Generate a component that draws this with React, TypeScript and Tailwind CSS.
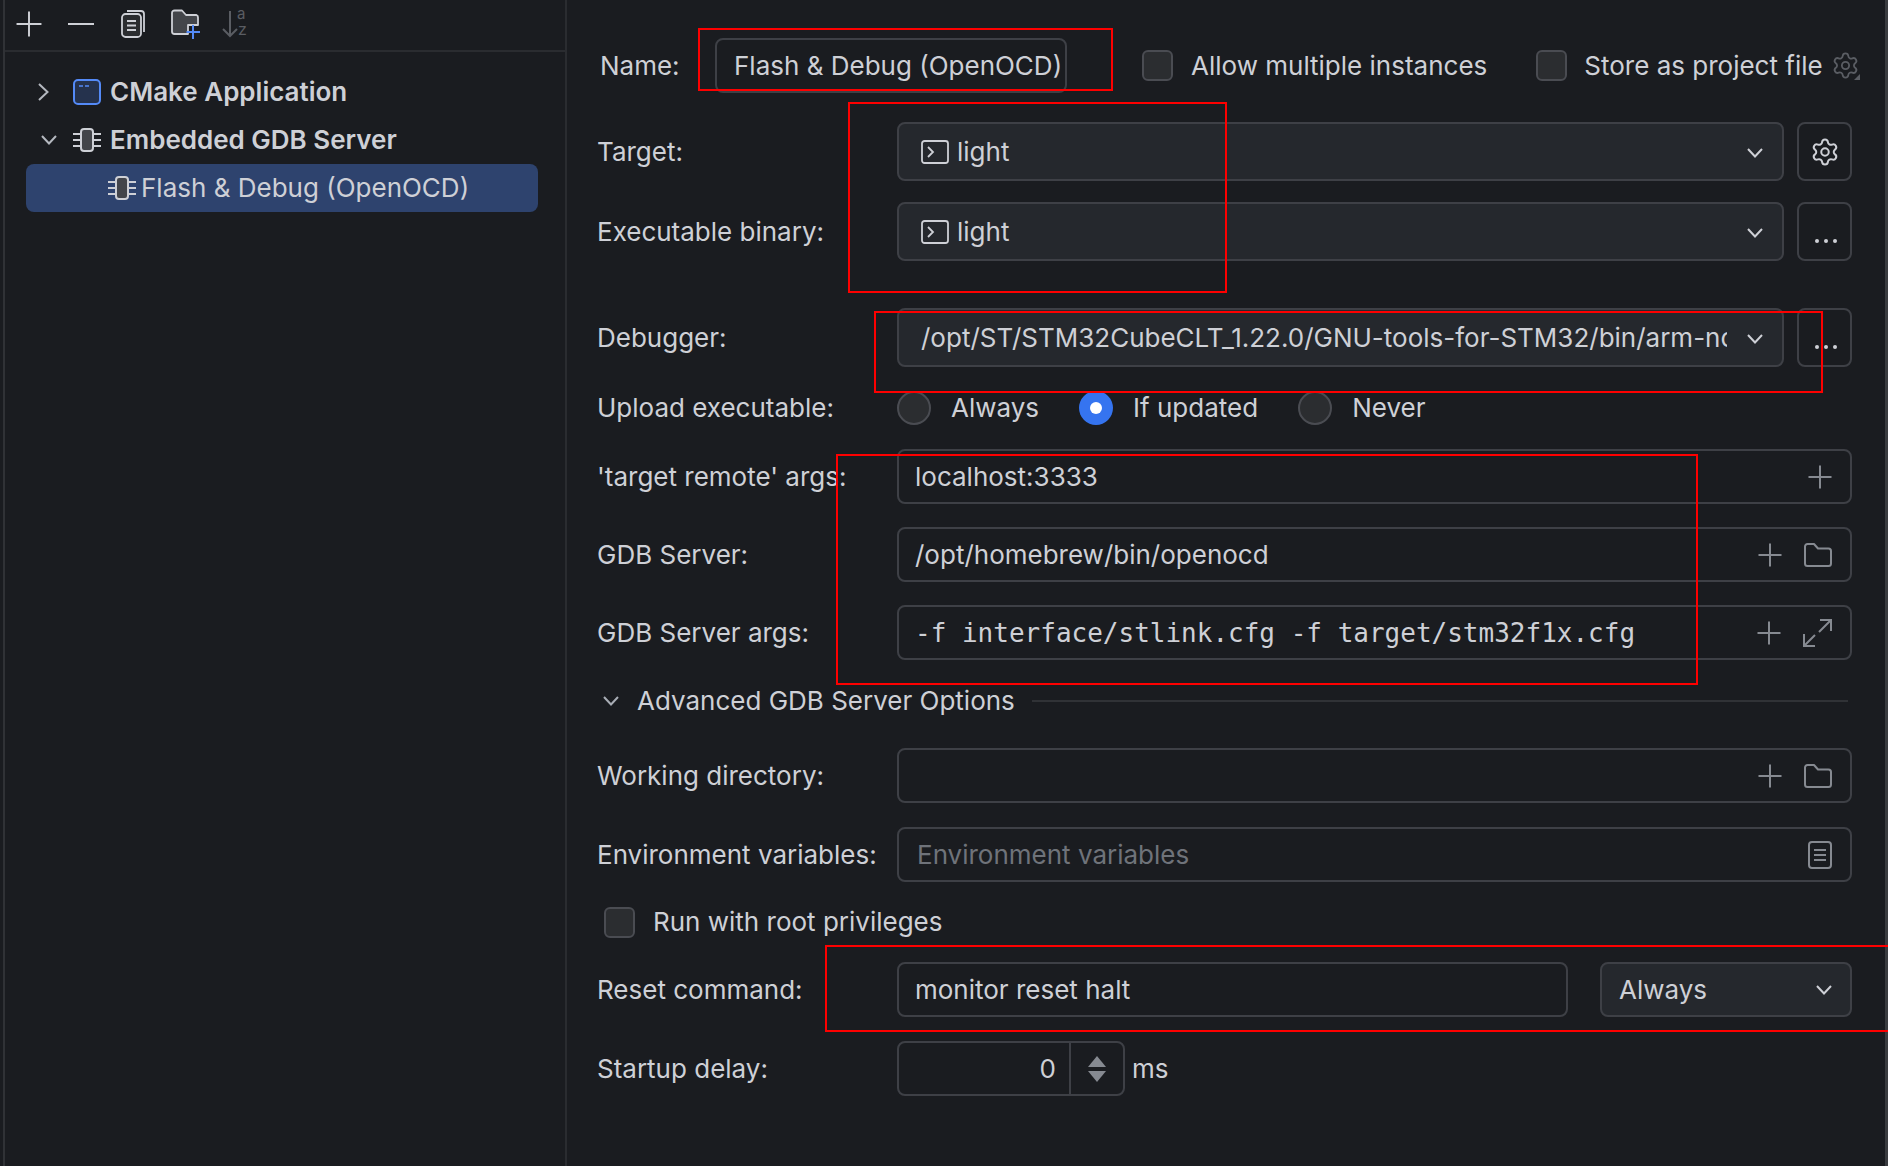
import React from "react";
import { Settings } from "lucide-react";

const Plus = ({ size = 24, color = "#868a91" }: { size?: number; color?: string }) => (
  <svg width={size} height={size} viewBox="0 0 24 24" fill="none" stroke={color} strokeWidth={size > 24 ? 1.8 : 2}>
    <path d="M12 0.5V23.5M0.5 12H23.5" />
  </svg>
);
const Folder = () => (
  <svg width="28" height="24" viewBox="0 0 28 24" fill="none" stroke="#868a91" strokeWidth="2" strokeLinejoin="round">
    <path d="M1 3.5A2.5 2.5 0 0 1 3.5 1H10L14 5.5H24.5A2.5 2.5 0 0 1 27 8V20.5A2.5 2.5 0 0 1 24.5 23H3.5A2.5 2.5 0 0 1 1 20.5Z" />
  </svg>
);
const Expand = () => (
  <svg width="29" height="29" viewBox="0 0 29 29" fill="none" stroke="#868a91" strokeWidth="2">
    <path d="M17 2H28V13M28 2L16 14M1 16V28H12M1 28L12 17" />
  </svg>
);
const Doc = () => (
  <svg width="24" height="28" viewBox="0 0 24 28" fill="none" stroke="#868a91" strokeWidth="2">
    <rect x="1" y="1" width="22" height="26" rx="3" />
    <path d="M6 9H18M6 14H18M6 19H18" />
  </svg>
);
const Chevron = ({ color = "#ced0d6" }: { color?: string }) => (
  <svg width="16" height="10" viewBox="0 0 16 10" fill="none" stroke={color} strokeWidth="2">
    <path d="M1 1L8 8.5L15 1" />
  </svg>
);
const Term = () => (
  <svg width="28" height="24" viewBox="0 0 28 24" fill="none" stroke="#ced0d6" strokeWidth="1.8">
    <rect x="1" y="1" width="26" height="22" rx="2.5" />
    <path d="M7 7L12 12L7 17" />
  </svg>
);
const Chip = () => (
  <svg width="28" height="24" viewBox="0 0 28 24" fill="none" stroke="#ced0d6" strokeWidth="2">
    <rect x="8" y="1" width="12" height="22" rx="3" fill="#43454a" />
    <path d="M0 6H8M0 12H8M0 18H8M20 6H28M20 12H28M20 18H28" />
  </svg>
);

const text = "text-[26px] leading-[32px] text-[#ced0d6]";

const Check = () => <div className="w-[31px] h-[31px] shrink-0 rounded-[6px] border-2 border-[#4a4c52] bg-[#2b2d30]" />;

const Label = ({ children }: { children: React.ReactNode }) => (
  <div className={`w-[300px] shrink-0 whitespace-nowrap ${text}`}>{children}</div>
);

const Field = ({ children, icons, mono }: { children?: React.ReactNode; icons?: React.ReactNode; mono?: boolean }) => (
  <div className="flex-1 h-[55px] flex items-center rounded-[8px] border-2 border-[#3e4046] pl-[16px] pr-[18px]">
    <div className={`flex-1 whitespace-nowrap ${text} ${mono ? "font-['DejaVu_Sans_Mono',monospace] text-[#ced0d6]" : ""}`}>{children}</div>
    <div className="flex items-center gap-[22px]">{icons}</div>
  </div>
);

const Select = ({ children }: { children: React.ReactNode }) => (
  <div className="flex-1 min-w-0 h-[59px] flex items-center rounded-[8px] border-2 border-[#3e4046] bg-[#25282d] pl-[22px] pr-[19px]">
    <div className={`flex-1 min-w-0 overflow-hidden whitespace-nowrap flex items-center gap-[8px] ${text}`}>{children}</div>
    <div className="ml-[20px] shrink-0 pt-[2px]"><Chevron /></div>
  </div>
);

const SideBtn = ({ children }: { children: React.ReactNode }) => (
  <div className="ml-[13px] w-[55px] h-[59px] shrink-0 flex items-center justify-center rounded-[8px] border-2 border-[#3e4046]">
    {children}
  </div>
);
const Dots = () => (
  <div className="flex gap-[5px] pt-[18px] pl-[3px]">
    <div className="w-[4px] h-[4px] rounded-full bg-[#ced0d6]" />
    <div className="w-[4px] h-[4px] rounded-full bg-[#ced0d6]" />
    <div className="w-[4px] h-[4px] rounded-full bg-[#ced0d6]" />
  </div>
);

const Radio = ({ on, children, cls }: { on?: boolean; children: React.ReactNode; cls?: string }) => (
  <div className={`flex items-center ${cls ?? ""}`}>
    {on ? (
      <div className="w-[34px] h-[34px] rounded-full bg-[#3574f0] flex items-center justify-center">
        <div className="w-[12px] h-[12px] rounded-full bg-white" />
      </div>
    ) : (
      <div className="w-[34px] h-[34px] rounded-full border-2 border-[#4a4c52] bg-[#2b2d30]" />
    )}
    <span className={`ml-[20px] ${text}`}>{children}</span>
  </div>
);

const Red = ({ cls }: { cls: string }) => <div className={`absolute border-2 border-[#fe0000] pointer-events-none ${cls}`} />;

export default function App() {
  return (
    <div className="relative w-[1888px] h-[1166px] overflow-hidden flex bg-[#1a1c20] font-['Inter',sans-serif]">
      <div className="w-[5px] shrink-0 border-r-2 border-[#303236]" />
      {/* sidebar */}
      <div className="w-[562px] shrink-0 border-r-2 border-[#2a2c30] flex flex-col">
        <div className="h-[52px] border-b-2 border-[#2a2c30] flex items-center pl-[11px] pb-[2px]">
          <Plus size={26} color="#ced0d6" />
          <div className="ml-[26px] w-[26px] h-[2px] bg-[#ced0d6]" />
          <svg className="ml-[27px]" width="24" height="28" viewBox="0 0 24 28" fill="none" stroke="#ced0d6" strokeWidth="1.8">
            <rect x="1" y="4" width="19" height="23" rx="3.5" fill="#2b2d30" />
            <path d="M6 1H20A3 3 0 0 1 23 4V22M6 11H15M6 15.5H15M6 20H15" />
          </svg>
          <svg className="ml-[26px]" width="30" height="30" viewBox="0 0 30 30" fill="none">
            <path d="M1 4A2.5 2.5 0 0 1 3.500 1.500H11L15 6H25.500A2.500 2.500 0 0 1 27 8.500V16H17V25H3.500A2.500 2.500 0 0 1 1 22.500Z" fill="#43454a" stroke="#ced0d6" strokeWidth="1.800" strokeLinejoin="round" />
            <path d="M22 16V30M15.500 23H29" stroke="#548af7" strokeWidth="2" />
          </svg>
          <div className="ml-[21px] w-[30px] h-[30px] relative">
            <svg width="30" height="30" viewBox="0 0 30 30" fill="none" stroke="#5a5d63" strokeWidth="2">
              <path d="M8 2V27M1 20L8 27L15 20" />
            </svg>
            <span className="absolute left-[15px] top-[-4px] text-[15px] leading-[18px] text-[#5a5d63]">a</span>
            <span className="absolute left-[16px] top-[11px] text-[16px] leading-[18px] text-[#5a5d63]">z</span>
          </div>
        </div>
        <div className="flex flex-col mt-[16px]">
          <div className="h-[48px] flex items-center">
            <svg className="ml-[33px]" width="11" height="18" viewBox="0 0 11 18" fill="none" stroke="#b4b8bf" strokeWidth="2"><path d="M1 1L9.500 9L1 17" /></svg>
            <svg className="ml-[24px]" width="28" height="26" viewBox="0 0 28 26" fill="none">
              <rect x="1" y="1" width="26" height="24" rx="4" fill="#25324d" stroke="#548af7" strokeWidth="2" />
              <path d="M6 7H10M12 7H16" stroke="#548af7" strokeWidth="1.500" />
            </svg>
            <span className="ml-[9px] text-[26px] leading-[32px] font-semibold text-[#ced0d6]">CMake Application</span>
          </div>
          <div className="h-[48px] flex items-center">
            <svg className="ml-[36px]" width="16" height="10" viewBox="0 0 16 10" fill="none" stroke="#b4b8bf" strokeWidth="2"><path d="M1 1L8 8.500L15 1" /></svg>
            <div className="ml-[16px]"><Chip /></div>
            <span className="ml-[9px] text-[26px] leading-[32px] font-semibold text-[#ced0d6]">Embedded GDB Server</span>
          </div>
          <div className="ml-[21px] w-[512px] h-[48px] rounded-[8px] bg-[#2e436e] flex items-center pl-[82px]">
            <Chip />
            <span className="ml-[5px] text-[26px] leading-[32px] text-[#ced0d6] whitespace-nowrap">Flash &amp; Debug (OpenOCD)</span>
          </div>
        </div>
      </div>
      {/* form */}
      <div className="flex-1 min-w-0 flex flex-col pl-[30px] pr-[33px] pt-[38px]">
        <div className="flex items-center h-[55px]">
          <div className={`w-[118px] pl-[3px] shrink-0 ${text}`}>Name:</div>
          <div className={`w-[352px] h-[55px] shrink-0 flex items-center rounded-[8px] border-2 border-[#3e4046] pl-[17px] whitespace-nowrap overflow-hidden ${text}`}>Flash &amp; Debug (OpenOCD)</div>
          <div className="ml-[75px]"><Check /></div>
          <span className={`ml-[18px] whitespace-nowrap ${text}`}>Allow multiple instances</span>
          <div className="ml-[49px]"><Check /></div>
          <span className={`ml-[17px] whitespace-nowrap ${text}`}>Store as project file</span>
          <div className="ml-[8px] relative">
            <Settings size={29} color="#5a5d63" strokeWidth={1.5} />
            <div className="absolute right-0 bottom-0 w-0 h-0 border-l-[6px] border-l-transparent border-b-[6px] border-b-[#5a5d63]" />
          </div>
        </div>
        <div className="flex items-center mt-[29px]">
          <Label>Target:</Label>
          <Select><Term /><span>light</span></Select>
          <SideBtn><Settings size={30} color="#ced0d6" strokeWidth={1.6} /></SideBtn>
        </div>
        <div className="flex items-center mt-[21px]">
          <Label>Executable binary:</Label>
          <Select><Term /><span>light</span></Select>
          <SideBtn><Dots /></SideBtn>
        </div>
        <div className="flex items-center mt-[47px]">
          <Label>Debugger:</Label>
          <Select>/opt/ST/STM32CubeCLT_1.22.0/GNU-tools-for-STM32/bin/arm-none-eabi-gdb</Select>
          <SideBtn><Dots /></SideBtn>
        </div>
        <div className="flex items-center mt-[24px] h-[34px]">
          <Label>Upload executable:</Label>
          <Radio>Always</Radio>
          <Radio on cls="ml-[40px]">If updated</Radio>
          <Radio cls="ml-[40px]">Never</Radio>
        </div>
        <div className="flex items-center mt-[24px]">
          <Label>'target remote' args:</Label>
          <Field icons={<Plus />}>localhost:3333</Field>
        </div>
        <div className="flex items-center mt-[23px]">
          <Label>GDB Server:</Label>
          <Field icons={<><Plus /><Folder /></>}>/opt/homebrew/bin/openocd</Field>
        </div>
        <div className="flex items-center mt-[23px]">
          <Label>GDB Server args:</Label>
          <Field mono icons={<><Plus /><Expand /></>}>-f interface/stlink.cfg -f target/stm32f1x.cfg</Field>
        </div>
        <div className="flex items-center mt-[21px] h-[40px]">
          <div className="ml-[6px]"><Chevron color="#a8adb5" /></div>
          <span className={`ml-[18px] whitespace-nowrap ${text}`}>Advanced GDB Server Options</span>
          <div className="ml-[17px] flex-1 h-[2px] bg-[#303236] mr-[4px]" />
        </div>
        <div className="flex items-center mt-[27px]">
          <Label>Working directory:</Label>
          <Field icons={<><Plus /><Folder /></>} />
        </div>
        <div className="flex items-center mt-[24px]">
          <Label>Environment variables:</Label>
          <Field icons={<Doc />}><span className="ml-[2px] text-[#6f737a]">Environment variables</span></Field>
        </div>
        <div className="flex items-center mt-[24px] h-[32px] pl-[7px]">
          <Check />
          <span className={`ml-[18px] ${text}`}>Run with root privileges</span>
        </div>
        <div className="flex items-center mt-[24px]">
          <Label>Reset command:</Label>
          <Field>monitor reset halt</Field>
          <div className="ml-[32px] w-[252px] h-[55px] flex items-center rounded-[8px] border-2 border-[#3e4046] bg-[#25282d] pl-[17px] pr-[18px]">
            <span className={`flex-1 ${text}`}>Always</span>
            <Chevron />
          </div>
        </div>
        <div className="flex items-center mt-[24px]">
          <Label>Startup delay:</Label>
          <div className="w-[228px] h-[55px] flex items-center rounded-[8px] border-2 border-[#3e4046]">
            <div className={`w-[172px] h-full flex items-center justify-end pr-[13px] border-r-2 border-[#3e4046] ${text}`}>0</div>
            <svg className="ml-[15px]" width="22" height="28" viewBox="0 0 22 28" fill="#868a91">
              <path d="M11 1L20 12H2Z" />
              <path d="M2 16H20L11 27Z" />
            </svg>
          </div>
          <span className={`ml-[7px] ${text}`}>ms</span>
        </div>
      </div>
      <div className="w-[3px] shrink-0 bg-[#3a3c40]" />
      <Red cls="left-[698px] top-[28px] w-[415px] h-[63px]" />
      <Red cls="left-[848px] top-[102px] w-[379px] h-[191px]" />
      <Red cls="left-[874px] top-[311px] w-[949px] h-[82px]" />
      <Red cls="left-[836px] top-[454px] w-[862px] h-[231px]" />
      <Red cls="left-[825px] top-[945px] w-[1070px] h-[87px]" />
    </div>
  );
}
